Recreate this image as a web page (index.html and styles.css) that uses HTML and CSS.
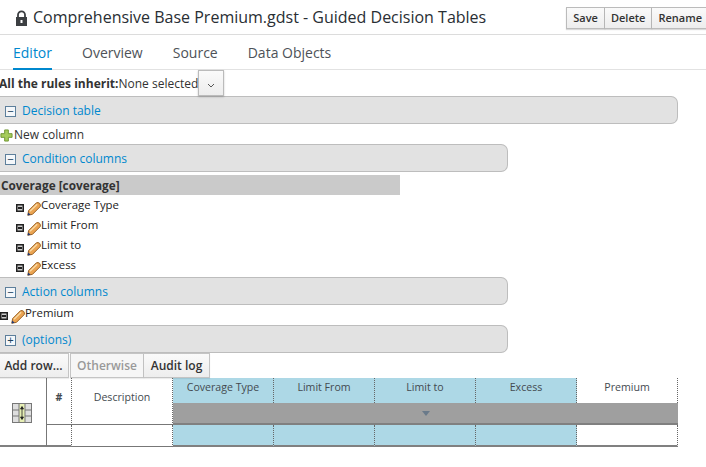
FILE: index.html
```html
<!DOCTYPE html>
<html lang="en">
<head>
  <meta charset="UTF-8">
  <title>Comprehensive Base Premium.gdst - Guided Decision Tables</title>
  <link rel="stylesheet" href="styles.css">
</head>
<body>
  <svg class="defs" width="0" height="0">
    <symbol id="pencil" viewBox="0 0 14 14">
      <path d="M0.8 13.2 L1.6 8.6 L9.4 0.8 Q11 0.1 12.6 1.3 Q13.9 2.9 13.2 4.6 L5.4 12.4 Z" fill="#eba452" stroke="#9a6326" stroke-width="1"/>
      <path d="M3 9.2 L10.2 2.2" stroke="#f9dca6" stroke-width="1.3"/>
      <path d="M0.6 13.4 L1.3 10.4 L3.6 12.7 Z" fill="#1f3a78"/>
    </symbol>
    <symbol id="dash-box" viewBox="0 0 8 8">
      <rect x="0.75" y="0.75" width="6.5" height="6.5" fill="#ccc" stroke="#222" stroke-width="1.5"/>
      <rect x="2" y="3" width="4" height="2" fill="#222"/>
    </symbol>
  </svg>

  <header class="title-bar">
    <svg class="lock" width="13" height="16" viewBox="0 0 13 16">
      <path d="M3 8 V4.8 a3.5 3.5 0 0 1 7 0 V8" fill="none" stroke="#3c3f42" stroke-width="1.8"/>
      <rect x="1" y="7" width="11" height="9" fill="#3c3f42"/>
      <rect x="5.5" y="10" width="2" height="3" fill="#fff"/>
    </svg>
    <h1>Comprehensive Base Premium.gdst - Guided Decision Tables</h1>
    <div class="btn-group">
      <button>Save</button><button>Delete</button><button>Rename</button>
    </div>
  </header>

  <nav class="tabs">
    <a class="tab active">Editor</a>
    <a class="tab">Overview</a>
    <a class="tab">Source</a>
    <a class="tab">Data Objects</a>
  </nav>

  <div class="inherit">
    <b>All the rules inherit:</b><span>None selected</span>
    <button class="select-btn">
      <svg width="8" height="5" viewBox="0 0 8 5"><path d="M1 1 L4 4 L7 1" fill="none" stroke="#555" stroke-width="1"/></svg>
    </button>
  </div>

  <div class="bar bar-wide">
    <span class="toggle">&minus;</span><a>Decision table</a>
  </div>
  <div class="new-col">
    <svg width="13" height="13" viewBox="0 0 14 14">
      <path d="M5 1 H9 V5 H13 V9 H9 V13 H5 V9 H1 V5 H5 Z" fill="#a6cc5a" stroke="#6d9430"/>
    </svg>
    <span>New column</span>
  </div>
  <div class="bar">
    <span class="toggle">&minus;</span><a>Condition columns</a>
  </div>

  <div class="pattern">Coverage [coverage]</div>
  <ul class="cols">
    <li><svg class="dash"><use href="#dash-box"/></svg><svg class="pen"><use href="#pencil"/></svg><span>Coverage Type</span></li>
    <li><svg class="dash"><use href="#dash-box"/></svg><svg class="pen"><use href="#pencil"/></svg><span>Limit From</span></li>
    <li><svg class="dash"><use href="#dash-box"/></svg><svg class="pen"><use href="#pencil"/></svg><span>Limit to</span></li>
    <li><svg class="dash"><use href="#dash-box"/></svg><svg class="pen"><use href="#pencil"/></svg><span>Excess</span></li>
  </ul>

  <div class="bar bar-action">
    <span class="toggle">&minus;</span><a>Action columns</a>
  </div>
  <ul class="cols cols-action">
    <li><svg class="dash"><use href="#dash-box"/></svg><svg class="pen"><use href="#pencil"/></svg><span>Premium</span></li>
  </ul>
  <div class="bar">
    <span class="toggle plus">+</span><a>(options)</a>
  </div>

  <div class="actions">
    <button class="add">Add row...</button><button class="disabled">Otherwise</button><button class="audit">Audit log</button>
  </div>

  <table class="grid">
    <colgroup>
      <col class="c-icon"><col class="c-num"><col class="c-desc">
      <col class="c-data"><col class="c-data"><col class="c-data"><col class="c-data"><col class="c-data">
    </colgroup>
    <tr class="r-head">
      <td class="icon-cell" rowspan="3">
        <svg width="20" height="20" viewBox="0 0 20 20">
          <rect x="0.5" y="0.5" width="19" height="19" fill="#dedede" stroke="#777"/>
          <rect x="7" y="1" width="6" height="18" fill="#e6eeb4"/>
          <path d="M7 1 V19 M13 1 V19 M1 7 H7 M13 7 H19 M1 13 H7 M13 13 H19" stroke="#777"/>
          <path d="M10 4 V16 M8.5 6 L10 3.5 L11.5 6 Z M8.5 14 L10 16.5 L11.5 14 Z" stroke="#222" fill="#222" stroke-width="0.8"/>
        </svg>
      </td>
      <th class="num" rowspan="2">#</th>
      <th class="desc" rowspan="2">Description</th>
      <th class="blue">Coverage Type</th>
      <th class="blue">Limit From</th>
      <th class="blue">Limit to</th>
      <th class="blue">Excess</th>
      <th>Premium</th>
    </tr>
    <tr class="r-filter">
      <td class="filter" colspan="5"><span class="arrow"></span></td>
    </tr>
    <tr class="r-row">
      <td class="solid"></td>
      <td class="desc"></td>
      <td class="blue"></td>
      <td class="blue"></td>
      <td class="blue"></td>
      <td class="blue"></td>
      <td></td>
    </tr>
  </table>
</body>
</html>
```

FILE: styles.css
```css
/* General */
body {
  font-family: 'Open Sans', sans-serif;
  font-size: 12px;
  color: #333;
  background: #fff;
  margin: 0;
  overflow: hidden;
}

.defs {
  position: absolute;
}

/* Title */
.title-bar {
  height: 34px;
  border-bottom: 1px solid #dcdcdc;
  display: flex;
  align-items: center;
  padding-left: 15px;
}

.lock {
  margin-right: 5px;
  margin-top: 2px;
}

h1 {
  font-size: 16px;
  font-weight: 400;
  color: #292e33;
  margin: 0;
  white-space: nowrap;
  flex: 1;
}

.btn-group {
  display: flex;
  margin: 1px -3px 0 0;
}

.btn-group button {
  height: 22px;
  padding: 0 6px;
  font: 600 11px 'Open Sans', sans-serif;
  color: #333;
  background: linear-gradient(#fafafa, #ededed);
  border: 1px solid #bbb;
  border-left: none;
  box-shadow: 0 1px 1px rgba(0, 0, 0, 0.15);
}

.btn-group button:first-child {
  border-left: 1px solid #bbb;
}

/* Tabs */
.tabs {
  height: 34px;
  border-bottom: 1px solid #e2e2e2;
  display: flex;
  gap: 30px;
  padding-left: 13px;
}

.tab {
  font-size: 14px;
  line-height: 35px;
  color: #4d5258;
}

.tab.active {
  color: #0088ce;
  border-bottom: 2px solid #0088ce;
  box-sizing: border-box;
  height: 35px;
}

/* Inherit row */
.inherit {
  height: 26px;
  display: flex;
  align-items: center;
  color: #333;
}

.inherit b {
  margin-left: -1px;
  font-weight: 700;
}

.select-btn {
  width: 26px;
  height: 26px;
  padding: 0;
  background: linear-gradient(#fafafa, #ededed);
  border: 1px solid #bbb;
  box-shadow: 0 1px 2px rgba(0, 0, 0, 0.2);
}

/* Section bars */
.bar {
  width: 508px;
  height: 28px;
  box-sizing: border-box;
  display: flex;
  align-items: center;
  padding-left: 5px;
  background: #e2e2e2;
  border: 1px solid #bdbdbd;
  border-left: none;
  border-radius: 0 7px 7px 0;
}

.bar a {
  color: #0088ce;
  font-size: 12px;
}

.bar-wide {
  width: 678px;
}

.bar-action {
  margin-top: 2px;
}

.toggle {
  width: 9px;
  height: 9px;
  margin-right: 6px;
  margin-top: 2px;
  border: 1px solid #5d7f9b;
  background: #f4f7fa;
  color: #20435f;
  font: 11px/8px 'Liberation Sans', sans-serif;
  text-align: center;
}

.new-col {
  height: 20px;
  display: flex;
  align-items: center;
}

.new-col svg {
  margin: 3px 1px 0 0;
}

/* Column lists */
.pattern {
  width: 400px;
  height: 20px;
  line-height: 20px;
  margin-top: 3px;
  background: #cacaca;
  font-size: 11.8px;
  font-weight: 700;
  padding-left: 1px;
  box-sizing: border-box;
}

.cols {
  list-style: none;
  margin: 0;
  padding: 0 0 0 16px;
}

.cols li {
  height: 20px;
  display: flex;
  color: #222;
  font-size: 11.4px;
  line-height: 20px;
}

.cols-action {
  display: flex;
  height: 20px;
  padding-left: 0;
}

.cols-action li {
  margin-top: -2px;
}

.dash {
  width: 8px;
  height: 8px;
  margin: 9px 3px 0 0;
}

.pen {
  width: 14px;
  height: 14px;
  margin-top: 7px;
}

/* Buttons under the bars */
.actions {
  height: 25px;
  display: flex;
}

.actions button {
  height: 25px;
  font: 600 12px 'Open Sans', sans-serif;
  color: #333;
  background: linear-gradient(#fafafa, #ededed);
  border: 1px solid #c4c4c4;
  box-shadow: 0 1px 1px rgba(0, 0, 0, 0.08);
}

.actions .add {
  width: 69px;
  padding: 0 1px 0 0;
  border-left: none;
  margin-right: 1px;
}

.actions .disabled {
  width: 74px;
  padding: 0;
  color: #999;
  background: #f6f6f6;
}

.actions .audit {
  width: 66px;
  padding: 0;
  border-left: none;
}

/* Decision table */
.grid {
  border-collapse: separate;
  border-spacing: 0;
  table-layout: fixed;
  width: 678px;
}

.c-icon { width: 47px; }
.c-num { width: 25px; }
.c-desc { width: 101px; }
.c-data { width: 101px; }

.grid th,
.grid td {
  padding: 0;
  font-size: 10.6px;
  font-weight: 400;
  color: #444a50;
  border-right: 1px dotted #666;
}

.r-head th {
  height: 25px;
  text-align: center;
  vertical-align: top;
  line-height: 18px;
}

.grid .num,
.grid .desc {
  vertical-align: top;
  line-height: 38px;
  border-bottom: 1px solid #777;
}

.grid .num {
  font-weight: 700;
}

.grid .icon-cell {
  text-align: center;
  vertical-align: middle;
  border-right: 1px solid #777;
  border-bottom: 2px solid #808080;
  padding: 6px 2px 0 0;
}

.blue {
  background: #add8e6;
}

.grid .filter {
  height: 20px;
  background: #9f9f9f;
  border-bottom: 2px solid #808080;
  border-right: none;
  text-align: center;
  vertical-align: middle;
  line-height: 0;
}

.arrow {
  display: inline-block;
  border: 4px solid transparent;
  border-top: 5px solid #6a7a8a;
  border-bottom: none;
}

.r-row td {
  height: 20px;
  border-bottom: 2px solid #808080;
}
```
